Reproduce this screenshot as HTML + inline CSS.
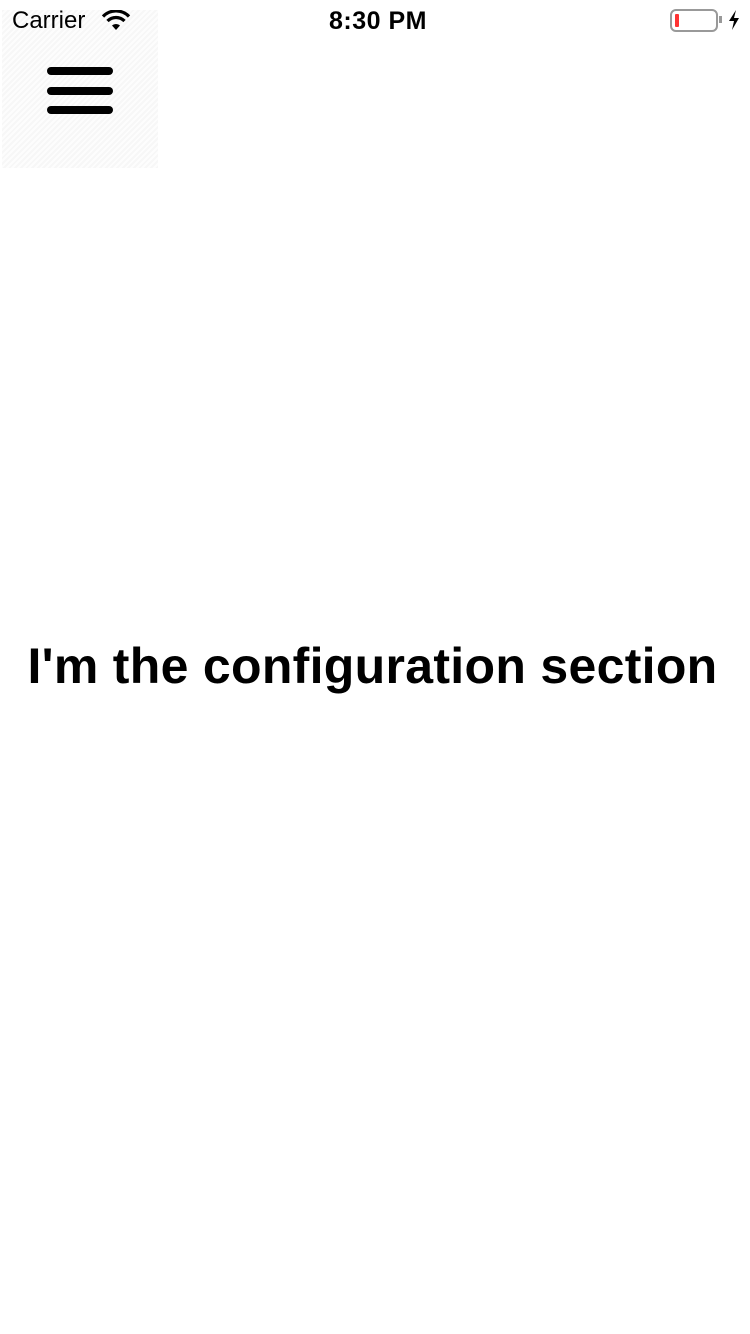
<!DOCTYPE html>
<html><head><meta charset="utf-8"><style>
body{margin:0;width:750px;height:1334px;background:#fff;position:relative;overflow:hidden;font-family:"Liberation Sans",sans-serif}
.a{position:absolute}
.bar{position:absolute;left:47px;width:66px;height:8px;border-radius:4px;background:#000}
</style></head><body>
<div class="a" style="left:2px;top:10px;width:156px;height:158px;background:repeating-linear-gradient(135deg,#f7f7f7 0 2px,#fdfdfd 2px 4px)"></div>
<div class="a" style="left:12px;top:7px;font-size:24px;color:#000">Carrier</div>
<svg class="a" style="left:101px;top:10px" width="30" height="22" viewBox="0 0 30 22"><path d="M15 20 L11 15.5 A6 6 0 0 1 19 15.5 Z" fill="#000"/><path d="M6.5 11 A12 12 0 0 1 23.5 11" stroke="#000" stroke-width="3.2" fill="none"/><path d="M2 6.5 A18 18 0 0 1 28 6.5" stroke="#000" stroke-width="3.2" fill="none"/></svg>
<div class="a" style="left:0;width:756px;top:7px;text-align:center;font-size:25px;font-weight:bold;color:#000;letter-spacing:0.5px">8:30 PM</div>
<div class="a" style="left:670px;top:9px;width:44px;height:19px;border:2px solid #999;border-radius:6px"></div>
<div class="a" style="left:675px;top:14px;width:4px;height:13px;background:#f33;border-radius:1px"></div>
<div class="a" style="left:719px;top:16px;width:3px;height:7px;background:#999"></div>
<svg class="a" style="left:728px;top:10px" width="12" height="20" viewBox="0 0 12 20"><path d="M8 0 L1 11 H6 L4 20 L11 8 H6 Z" fill="#000"/></svg>
<div class="bar" style="top:67px"></div>
<div class="bar" style="top:87px"></div>
<div class="bar" style="top:106px"></div>
<div class="a" style="left:0;width:745px;top:637px;text-align:center;font-size:50px;font-weight:bold;color:#000;letter-spacing:0.3px">I'm the configuration section</div>
</body></html>
